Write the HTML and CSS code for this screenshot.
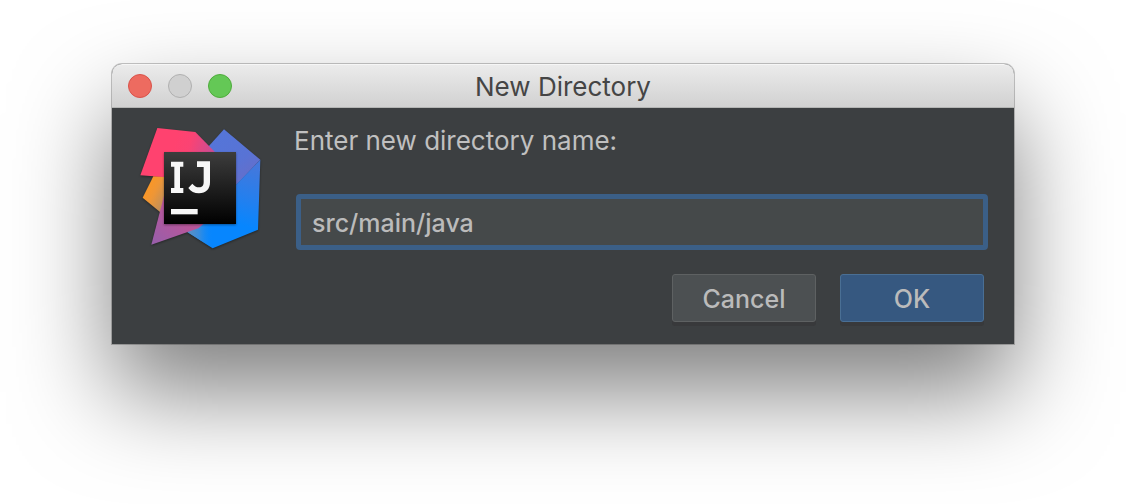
FILE: index.html
```html
<!DOCTYPE html>
<html lang="en">
<head>
<meta charset="utf-8">
<title>New Directory</title>
<link rel="stylesheet" href="styles.css">
</head>
<body>
<main class="dialog" role="dialog" aria-labelledby="dialog-title">
  <header class="titlebar">
    <div class="lights">
      <button class="light light-close" type="button" aria-label="Close"></button>
      <button class="light light-minimize" type="button" aria-label="Minimize" disabled></button>
      <button class="light light-zoom" type="button" aria-label="Zoom"></button>
    </div>
    <h1 class="title" id="dialog-title">New Directory</h1>
  </header>
  <form class="content">
    <svg class="logo" viewBox="18 27 384 384" aria-hidden="true">
      <defs>
        <linearGradient id="orange" gradientUnits="userSpaceOnUse" x1="40" y1="230" x2="120" y2="270">
          <stop offset="0" stop-color="#fc9724"/><stop offset=".35" stop-color="#ee9636"/><stop offset="1" stop-color="#a98b6c"/>
        </linearGradient>
        <linearGradient id="pink" gradientUnits="userSpaceOnUse" x1="130" y1="100" x2="270" y2="140">
          <stop offset="0" stop-color="#ff426f"/><stop offset=".3" stop-color="#fb4373"/><stop offset="1" stop-color="#b650a0"/>
        </linearGradient>
        <linearGradient id="purple" gradientUnits="userSpaceOnUse" x1="140" y1="300" x2="64" y2="389">
          <stop offset="0" stop-color="#b8569a"/><stop offset="1" stop-color="#965fab"/>
        </linearGradient>
        <linearGradient id="indigo" gradientUnits="userSpaceOnUse" x1="250" y1="80" x2="350" y2="200">
          <stop offset="0" stop-color="#5575d8"/><stop offset=".6" stop-color="#5873d5"/><stop offset="1" stop-color="#666ec9"/>
        </linearGradient>
        <linearGradient id="blue" gradientUnits="userSpaceOnUse" x1="360" y1="150" x2="290" y2="380">
          <stop offset="0" stop-color="#4378dc"/><stop offset=".4" stop-color="#257fed"/><stop offset=".75" stop-color="#0786fe"/><stop offset="1" stop-color="#0786fe"/>
        </linearGradient>
        <linearGradient id="teal" gradientUnits="userSpaceOnUse" x1="172" y1="350" x2="250" y2="350">
          <stop offset="0" stop-color="#618fc0"/><stop offset=".45" stop-color="#388ddd"/><stop offset="1" stop-color="#0786fe" stop-opacity="0"/>
        </linearGradient>
        <linearGradient id="black" x1="0" y1="0" x2="0" y2="1">
          <stop offset="0" stop-color="#3d3d3d"/><stop offset="1" stop-color="#000"/>
        </linearGradient>
        <filter id="soft" x="-10%" y="-10%" width="120%" height="125%" color-interpolation-filters="sRGB">
          <feDropShadow dx="0" dy="3" stdDeviation="3" flood-color="#000" flood-opacity=".4"/>
        </filter>
      </defs>
      <g filter="url(#soft)">
        <path fill="url(#orange)" d="M70 184 38 248 91 292 160 240V184Z"/>
        <path fill="url(#indigo)" d="M282 43 391 134 318 211 220 200 190 145Z"/>
        <path fill="url(#blue)" d="M391 134 384 344 248 400 172 351 270 259Z"/>
        <path fill="url(#teal)" d="M172 351 248 400 260 395V300H200Z"/>
        <path fill="url(#purple)" d="M104 235 64 389 205 340 235 315V235Z"/>
        <path fill="url(#pink)" d="M82 39 196 51 254 110 220 195 31 181Z"/>
      </g>
      <g filter="url(#soft)">
        <path fill="url(#black)" d="M102 111H318V327H102Z"/>
      </g>
      <g fill="#f7f7f7">
        <path d="M123 140H160V155H150V219H160V234H123V219H133V155H123Z"/>
        <path d="M201 139H240V202C240 222 228 235 207 235C193 235 182 229 175 219L187 206C193 213 199 217 207 217C217 217 221 211 221 201V156H201Z"/>
        <path d="M123 282H203V298H123Z"/>
      </g>
    </svg>
    <div class="fields">
      <label class="prompt" for="directory">Enter new directory name:</label>
      <input class="name" id="directory" type="text" value="src/main/java" spellcheck="false" autocomplete="off">
      <div class="actions">
        <button class="button" type="button">Cancel</button>
        <button class="button button-default" type="submit">OK</button>
      </div>
    </div>
  </form>
</main>
</body>
</html>
```
FILE: styles.css
```css
* {
  box-sizing: border-box;
}

body {
  min-height: 100vh;
  margin: 0;
  padding: 64px 112px;
  background: #fff;
  font-family: Inter, "Liberation Sans", sans-serif;
  font-size: 26px;
  line-height: 32px;
}

.dialog {
  border-radius: 10px 10px 0 0;
  background: #3c3f41;
  box-shadow: 0 0 0 1px rgba(0, 0, 0, 0.22), 0 48px 96px rgba(0, 0, 0, 0.5);
}

.titlebar {
  display: grid;
  grid-template-columns: 1fr auto 1fr;
  align-items: center;
  height: 44px;
  padding: 0 16px;
  border-top: 1px solid #f6f6f6;
  border-bottom: 1px solid #b4b5b4;
  border-radius: 10px 10px 0 0;
  background: linear-gradient(#ebebeb, #d1d1d1);
}

.lights {
  display: flex;
  gap: 16px;
}

.light {
  width: 24px;
  height: 24px;
  padding: 0;
  border: 1px solid;
  border-radius: 50%;
}

.light-close {
  border-color: #d9534a;
  background: #ed6b60;
}

.light-minimize {
  border-color: #b0b0b0;
  background: #d0d0d0;
}

.light-zoom {
  border-color: #4fac3c;
  background: #64c856;
}

.title {
  margin: 0;
  padding-top: 2px;
  color: #454545;
  font-size: 26px;
  font-weight: 400;
}

.content {
  display: flex;
  gap: 32px;
  padding: 16px 26px 22px 24px;
}

.logo {
  flex: none;
  width: 128px;
  height: 128px;
}

.fields {
  display: flex;
  flex: 1;
  flex-direction: column;
  min-width: 0;
}

.prompt {
  margin: 0 0 37px -2px;
  padding-top: 1px;
  color: #c0c0c0;
}

.name {
  width: 100%;
  height: 56px;
  padding: 1px 11px 0;
  border: 5px solid #3b5f87;
  border-radius: 4px;
  outline: none;
  background: #45494a;
  color: #bbb;
  font: inherit;
  font-size: 25px;
  font-weight: 500;
}

.actions {
  display: flex;
  justify-content: flex-end;
  gap: 24px;
  padding: 24px 4px 0 0;
}

.button {
  width: 144px;
  height: 48px;
  padding: 2px 0 0;
  border: 1px solid #5e6162;
  border-radius: 3px;
  background: #4c5052;
  box-shadow: 0 4px 0 #38393b;
  color: #bbb;
  font: inherit;
  font-size: 25px;
  font-weight: 500;
}

.button-default {
  border-color: #4a6f94;
  background: #365880;
}
```
